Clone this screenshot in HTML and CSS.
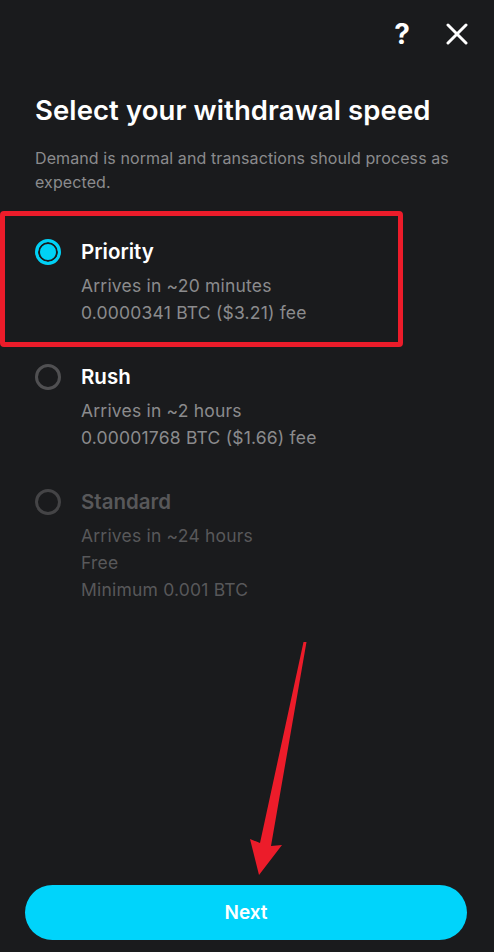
FILE: index.html
```html
<!DOCTYPE html>
<html>
<head>
<meta charset="utf-8">
<link rel="stylesheet" href="styles.css">
</head>
<body>
<div class="screen">
  <header class="topbar">
    <span class="help">?</span>
    <svg class="close" width="22" height="22" viewBox="0 0 22 22"><path d="M2 2 L20 20 M20 2 L2 20" stroke="#fff" stroke-width="3" stroke-linecap="round"/></svg>
  </header>
  <main class="content">
    <h1 class="title">Select your withdrawal speed</h1>
    <p class="desc">Demand is normal and transactions should process as expected.</p>
    <div class="options">
      <div class="option">
        <span class="radio selected"></span>
        <div class="info">
          <div class="name">Priority</div>
          <div class="line">Arrives in ~20 minutes</div>
          <div class="line">0.0000341 BTC ($3.21) fee</div>
        </div>
      </div>
      <div class="option">
        <span class="radio"></span>
        <div class="info">
          <div class="name">Rush</div>
          <div class="line">Arrives in ~2 hours</div>
          <div class="line">0.00001768 BTC ($1.66) fee</div>
        </div>
      </div>
      <div class="option disabled">
        <span class="radio"></span>
        <div class="info">
          <div class="name">Standard</div>
          <div class="line">Arrives in ~24 hours</div>
          <div class="line">Free</div>
          <div class="line">Minimum 0.001 BTC</div>
        </div>
      </div>
    </div>
  </main>
  <footer class="footer">
    <button class="next">Next</button>
  </footer>
  <div class="highlight"></div>
  <svg class="arrow" width="494" height="952" viewBox="0 0 494 952"><polygon points="303.5,642 306.5,642 271,846 282,845 259,875 250,839 260,843" fill="#ec1c2a"/></svg>
</div>
</body>
</html>
```

FILE: styles.css
```css
html, body {
  margin: 0;
  padding: 0;
  background: #1a1b1d;
}
.screen {
  position: relative;
  width: 494px;
  height: 952px;
  display: flex;
  flex-direction: column;
  font-family: "Inter", "Liberation Sans", sans-serif;
  color: #fff;
  overflow: hidden;
}
.topbar {
  display: flex;
  justify-content: flex-end;
  align-items: center;
  gap: 36px;
  height: 34px;
  padding: 17px 26px 0 0;
}
.help {
  font-size: 28px;
  font-weight: 700;
  line-height: 34px;
}
.close {
  display: block;
}
.content {
  flex: 1;
  padding: 0 35px;
}
.title {
  margin: 42px 0 0;
  font-size: 27.5px;
  font-weight: 600;
  line-height: 34px;
  letter-spacing: 0.1px;
  white-space: nowrap;
}
.desc {
  margin: 19px 0 0;
  font-size: 16px;
  line-height: 24px;
  color: #8b8b8d;
  letter-spacing: 0.1px;
}
.options {
  margin-top: 44px;
  display: flex;
  flex-direction: column;
  gap: 37px;
}
.option {
  display: flex;
  gap: 20px;
  align-items: flex-start;
}
.radio {
  box-sizing: border-box;
  width: 26px;
  height: 26px;
  margin-top: 1px;
  border-radius: 50%;
  border: 3px solid #505052;
  flex: none;
}
.radio.selected {
  border-color: #00d2f6;
  background: #00d2f6;
  box-shadow: inset 0 0 0 2px #1a1b1d;
}
.name {
  font-size: 20.5px;
  font-weight: 600;
  line-height: 28px;
  margin-bottom: 6px;
}
.line {
  font-size: 17.5px;
  line-height: 27px;
  color: #8b8b8d;
  letter-spacing: 0.2px;
  white-space: nowrap;
}
.disabled .name, .disabled .line {
  color: #58585a;
}
.disabled .radio {
  border-color: #444446;
}
.footer {
  padding: 0 27px 12px 25px;
}
.next {
  display: block;
  width: 100%;
  height: 55px;
  border: none;
  border-radius: 28px;
  background: #00d4fb;
  color: #fff;
  font-family: "Inter", "Liberation Sans", sans-serif;
  font-size: 19px;
  font-weight: 600;
}
.highlight {
  position: absolute;
  left: 0;
  top: 211px;
  width: 403px;
  height: 136px;
  box-sizing: border-box;
  border: 5px solid #ec1c2a;
  border-radius: 4px;
}
.arrow {
  position: absolute;
  left: 0;
  top: 0;
  pointer-events: none;
}
```
